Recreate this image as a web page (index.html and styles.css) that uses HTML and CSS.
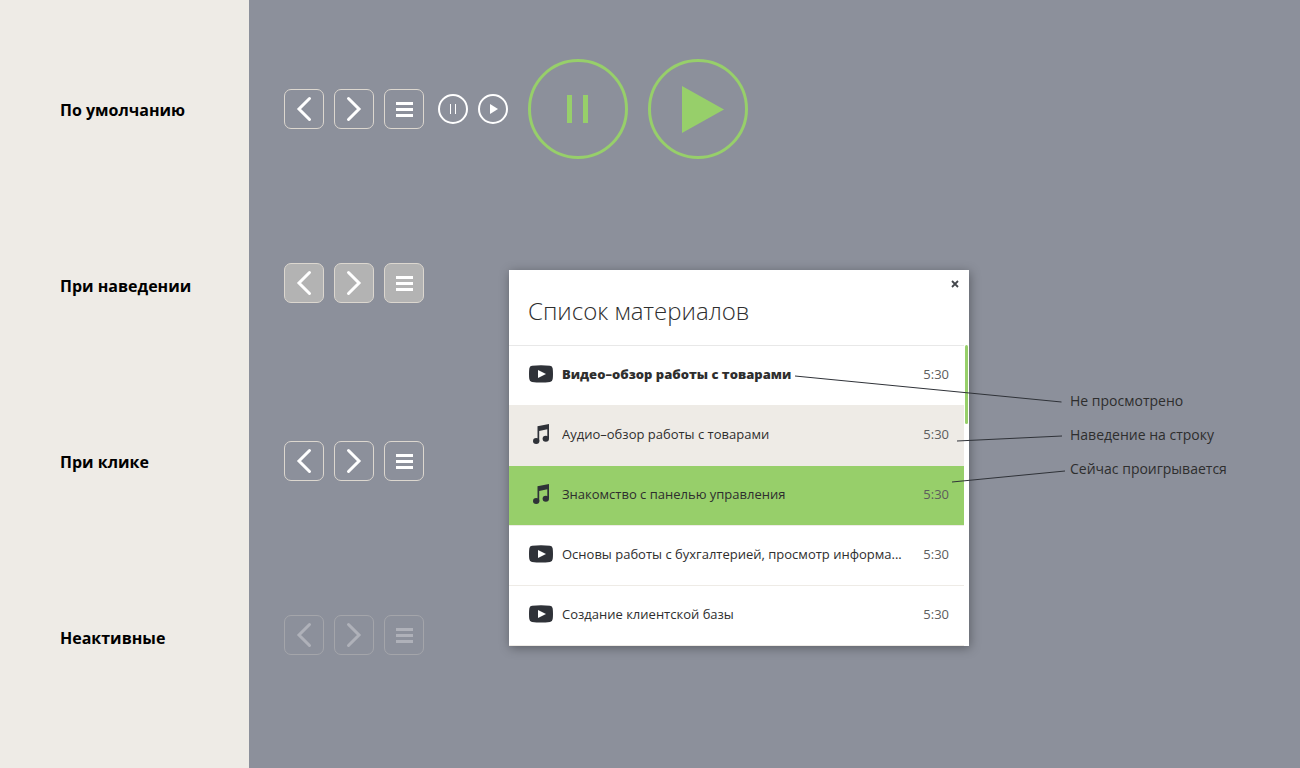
FILE: index.html
```html
<!DOCTYPE html>
<html lang="ru">
<head>
<meta charset="utf-8">
<title>Состояния элементов</title>
<link rel="stylesheet" href="styles.css">
</head>
<body>
<svg class="sprite" aria-hidden="true">
  <symbol id="prev" viewBox="0 0 40 40"><path d="M25.500 9.500L15 20l10.500 10.500" fill="none" stroke="currentColor" stroke-width="3" stroke-linecap="round"/></symbol>
  <symbol id="next" viewBox="0 0 40 40"><path d="M14.500 9.500L25 20 14.500 30.500" fill="none" stroke="currentColor" stroke-width="3" stroke-linecap="round"/></symbol>
  <symbol id="menu" viewBox="0 0 40 40"><path d="M12 13h17v3H12zM12 19h17v3H12zM12 25h17v3H12z" fill="currentColor"/></symbol>
  <symbol id="video" viewBox="0 0 24 18"><path d="M3 .7Q12-.3 21 .7 23.400 1 23.700 3.500 24.300 9 23.700 14 23.400 16.700 21 17 12 18 3 17 .600 16.700.300 14-.300 9 .300 3.500.600 1 3 .700z" fill="#2f3238"/><path d="M9 5v8l8-4z" fill="#fff"/></symbol>
  <symbol id="audio" viewBox="0 0 24 24"><path d="M8.500 4.300L20 2v14.500h-1.700V7.300L10.200 9v10.500H8.500z" fill="#2f3238"/><ellipse cx="7.200" cy="19" rx="3.200" ry="3" fill="#2f3238"/><ellipse cx="16.800" cy="16.800" rx="3.200" ry="3" fill="#2f3238"/></symbol>
</svg>
<div class="page">
  <aside class="labels">
    <h2 class="label">По умолчанию</h2>
    <h2 class="label">При наведении</h2>
    <h2 class="label">При клике</h2>
    <h2 class="label">Неактивные</h2>
  </aside>
  <main class="stage">
    <div class="controls controls-main">
      <button class="btn" aria-label="Назад"><svg><use href="#prev"/></svg></button>
      <button class="btn" aria-label="Вперёд"><svg><use href="#next"/></svg></button>
      <button class="btn" aria-label="Список"><svg><use href="#menu"/></svg></button>
      <div class="round-small">
        <button class="round" aria-label="Пауза"><svg viewBox="0 0 30 30"><path d="M12 10h1v10h-1zM17 10h1v10h-1z" fill="currentColor"/></svg></button>
        <button class="round" aria-label="Играть"><svg viewBox="0 0 30 30"><path d="M12 10v10l8-5z" fill="currentColor"/></svg></button>
      </div>
      <div class="round-large">
        <button class="round large" aria-label="Пауза"><svg viewBox="0 0 100 100"><path d="M39 36h5v28h-5zM55 36h5v28h-5z" fill="currentColor"/></svg></button>
        <button class="round large" aria-label="Играть"><svg viewBox="0 0 100 100"><path d="M34 27v47l42-23.500z" fill="currentColor"/></svg></button>
      </div>
    </div>
    <div class="lower">
      <div class="states">
        <div class="controls hover">
          <button class="btn" aria-label="Назад"><svg><use href="#prev"/></svg></button>
          <button class="btn" aria-label="Вперёд"><svg><use href="#next"/></svg></button>
          <button class="btn" aria-label="Список"><svg><use href="#menu"/></svg></button>
        </div>
        <div class="controls click">
          <button class="btn" aria-label="Назад"><svg><use href="#prev"/></svg></button>
          <button class="btn" aria-label="Вперёд"><svg><use href="#next"/></svg></button>
          <button class="btn" aria-label="Список"><svg><use href="#menu"/></svg></button>
        </div>
        <div class="controls inactive">
          <button class="btn" disabled aria-label="Назад"><svg><use href="#prev"/></svg></button>
          <button class="btn" disabled aria-label="Вперёд"><svg><use href="#next"/></svg></button>
          <button class="btn" disabled aria-label="Список"><svg><use href="#menu"/></svg></button>
        </div>
      </div>
      <section class="panel">
        <header class="panel-head">
          <h1 class="title">Список материалов</h1>
          <button class="close" aria-label="Закрыть"><svg viewBox="0 0 8 8"><path d="M1 1l6 6M7 1L1 7" stroke="#44474c" stroke-width="1.800"/></svg></button>
        </header>
        <ul class="list">
          <li class="item unseen"><svg class="icon video"><use href="#video"/></svg><span class="name">Видео–обзор работы с товарами</span><span class="time">5:30</span></li>
          <li class="item hovered"><svg class="icon audio"><use href="#audio"/></svg><span class="name">Аудио–обзор работы с товарами</span><span class="time">5:30</span></li>
          <li class="item playing"><svg class="icon audio"><use href="#audio"/></svg><span class="name">Знакомство с панелью управления</span><span class="time">5:30</span></li>
          <li class="item"><svg class="icon video"><use href="#video"/></svg><span class="name">Основы работы с бухгалтерией, просмотр информа...</span><span class="time">5:30</span></li>
          <li class="item"><svg class="icon video"><use href="#video"/></svg><span class="name">Создание клиентской базы</span><span class="time">5:30</span></li>
        </ul>
        <div class="thumb"></div>
        <svg class="leaders" viewBox="0 0 560 376" aria-hidden="true"><path d="M286 106L552.500 132M448 171L553 166M443 212L556 201" fill="none" stroke="#2f3238"/></svg>
      </section>
      <div class="notes">
        <p class="note">Не просмотрено</p>
        <p class="note">Наведение на строку</p>
        <p class="note">Сейчас проигрывается</p>
      </div>
    </div>
  </main>
</div>
</body>
</html>
```

FILE: styles.css
```css
* { box-sizing: border-box; }
body { margin: 0; font-family: "Open Sans", "Noto Sans", sans-serif; color: #2e2e2e; background: #8c909b; }
h1, h2, p, ul { margin: 0; padding: 0; }
button { padding: 0; background: none; font: inherit; cursor: pointer; }
svg { display: block; }
.sprite { display: none; }
.page { display: flex; min-height: 100vh; }

.labels { flex: 0 0 249px; padding: 98px 20px 0 60px; background: #eeebe6; display: flex; flex-direction: column; gap: 152px; }
.label { font-size: 16px; line-height: 24px; font-weight: 700; color: #000; }

.stage { flex: 1; min-width: 0; padding: 59px 0 0 35px; }
.controls { display: flex; align-items: center; gap: 10px; }
.round-small { display: flex; gap: 10px; margin-left: 4px; }
.round-large { display: flex; gap: 20px; margin-left: 10px; }
.btn { width: 40px; height: 40px; border: 1px solid #dcd7cf; border-radius: 7px; color: #fff; }
.btn svg { width: 40px; height: 40px; margin: -1px; }
.hover .btn { background: #b3b3b3; }
.inactive .btn { opacity: 0.3; }
.round { width: 30px; height: 30px; border: 2px solid #fff; border-radius: 50%; color: #fff; }
.round svg { width: 30px; height: 30px; margin: -2px; }
.round.large { width: 100px; height: 100px; border: 3px solid #97cf6a; color: #97cf6a; }
.large svg { width: 100px; height: 100px; margin: -3px; }

.lower { display: flex; align-items: flex-start; }
.states { flex: 0 0 225px; padding-top: 104px; }
.click { margin-top: 138px; }
.inactive { margin-top: 134px; }

.panel { position: relative; flex: 0 0 460px; margin-top: 111px; background: #fff; box-shadow: 1px 2px 10px rgba(0, 0, 0, 0.35); }
.panel-head { display: flex; justify-content: space-between; align-items: flex-start; height: 76px; margin-right: 5px; padding: 0 4px 0 19px; border-bottom: 1px solid #e8e8e8; }
.title { padding-top: 24px; font-size: 24px; line-height: 34px; font-weight: 300; }
.close { margin-top: 9px; padding: 1px; border: 0; }
.close svg { width: 8px; height: 8px; }
.list { list-style: none; margin-right: 5px; font-size: 13px; }
.item { display: flex; align-items: center; height: 60px; padding: 0 15px 4px 20px; border-bottom: 1px solid #eeebe6; }
.icon { flex: none; width: 24px; margin-right: 9px; }
.icon.video { height: 18px; }
.icon.audio { height: 24px; }
.name { flex: 1; white-space: nowrap; overflow: hidden; text-overflow: ellipsis; }
.time { margin-left: 15px; color: #5c5c5c; }
.unseen .name { font-weight: 800; }
.hovered { background: #eeebe6; }
.playing { background: #97cf6a; }
.thumb { position: absolute; top: 75px; right: 1px; width: 3px; height: 79px; border-radius: 2px; background: #97cf6a; }
.leaders { position: absolute; top: 0; left: 0; width: 560px; height: 376px; pointer-events: none; }

.notes { flex: 1; display: flex; flex-direction: column; gap: 14px; padding: 232px 0 0 101px; }
.note { font-size: 14px; line-height: 20px; white-space: nowrap; }
```
